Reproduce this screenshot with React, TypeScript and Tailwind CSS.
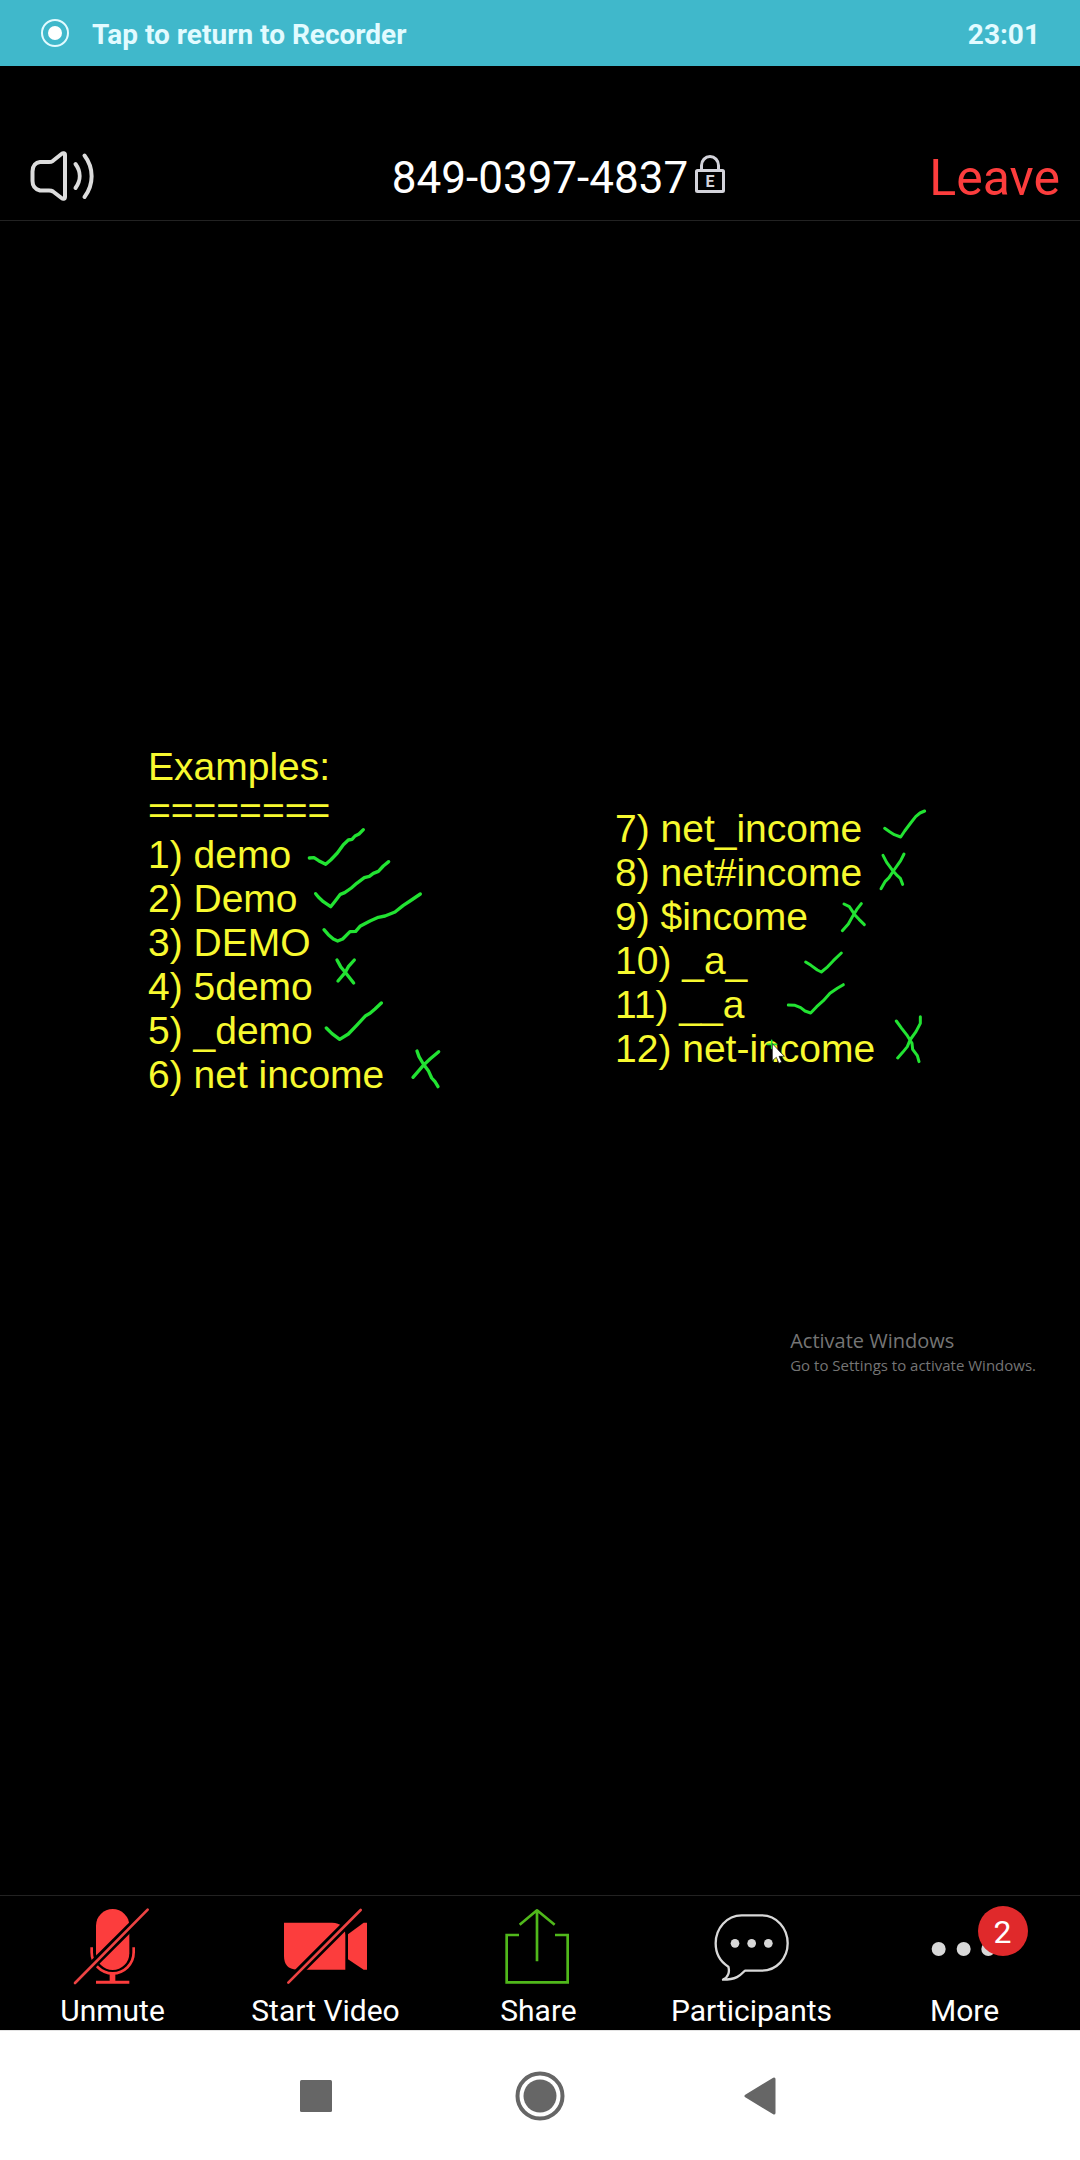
const roboto = 'font-[Roboto,sans-serif]';

const leftItems = ['1) demo', '2) Demo', '3) DEMO', '4) 5demo', '5) _demo', '6) net income'];
const rightItems = ['7) net_income', '8) net#income', '9) $income', '10) _a_', '11) __a', '12) net-income'];

function StatusBar() {
  return (
    <button className="flex h-[66px] w-full items-center px-10 text-[28px] leading-8 font-bold text-[#e2fbff]">
      <svg className="h-[30px] w-[30px]" viewBox="0 0 30 30" aria-hidden="true">
        <circle cx="15" cy="15" r="13" fill="none" stroke="#e2fbff" strokeWidth="2" />
        <circle cx="15" cy="15" r="7" fill="#fff" />
      </svg>
      <span className="ml-[22px] pt-1">Tap to return to Recorder</span>
      <time className="ml-auto pt-1">23:01</time>
    </button>
  );
}

function SpeakerIcon() {
  return (
    <svg className="h-[52px] w-[68px]" viewBox="28 150 68 52" fill="none" stroke="#dcdcdc" strokeWidth="4" strokeLinecap="round" strokeLinejoin="round" aria-hidden="true">
      <path d="M40 162H49C51 162 52 161.500 53 160.800L61.500 154C63 152.800 65 153 65 155V197C65 199 63 199.200 61.500 198L53 191.500C52 190.800 51 190.500 49 190.500H40C36 189.500 32.500 187 32.500 181V171.500C32.500 165.500 36 162.500 40 162Z" />
      <path d="M75.500 164C81 171.500 81 180.500 75.500 188" />
      <path d="M84.500 155.500C94 168 94 184.500 84.500 197" />
    </svg>
  );
}

function LockIcon() {
  return (
    <svg className="h-10 w-8" viewBox="694 154 32 40" fill="none" stroke="#d3d3da" strokeWidth="3" aria-hidden="true">
      <rect x="696.500" y="170.500" width="27" height="21" rx="1" />
      <path d="M701.500 170V165.500A8.500 9 0 0 1 718.500 165.500V170" />
      <text x="710" y="187" textAnchor="middle" fontSize="16" fontWeight="700" fontFamily="Roboto, sans-serif" fill="#d3d3da" stroke="none">E</text>
    </svg>
  );
}

function MeetingHeader() {
  return (
    <header className="border-b border-[#222] pt-[68px]">
      <div className="grid h-[86px] grid-cols-[1fr_auto_1fr] items-center px-5">
        <button aria-label="Speaker" className="justify-self-start pb-0.5 pl-2">
          <SpeakerIcon />
        </button>
        <h1 className="pt-0.5 text-[44px] leading-[52px]">849-0397-4837</h1>
        <div className="flex items-center justify-between pl-1.5">
          <span className="pb-1.5"><LockIcon /></span>
          <button className="pt-0.5 text-[50px] leading-[58px] text-[#fc3d3d]">Leave</button>
        </div>
      </div>
    </header>
  );
}

function LeftMarks() {
  return (
    <svg className="pointer-events-none absolute -top-[15px] -left-[18px] h-[380px] w-[330px]" viewBox="0 0 990 1140" fill="none" stroke="#22e332" strokeWidth="10" strokeLinecap="round" strokeLinejoin="round" aria-hidden="true">
      <path d="M538 384L552 383L566 392L587 403L602 390L622 369L640 344L655 330L666 328L675 318L687 312L700 299" />
      <path d="M557 491L565 501L580 515L602 530L614 515L631 493L644 488L664 474L680 460L703 443L718 439L730 430L745 424L760 408L776 395" />
      <path d="M582 599L595 614L610 627L623 633L638 627L660 605L677 604L690 589L720 573L745 562L765 558L795 546L820 526L840 513L871 492" />
      <path d="M621 690L632 710L648 730L671 759M673 690L655 710L646 727L624 753" />
      <path d="M589 894L606 911L629 928L655 912L680 886L707 857L720 850L735 837L754 819" />
      <path d="M861 963L867 980L880 1002L895 1022L905 1044L915 1055L924 1070M926 965L900 987L880 1006L862 1027L849 1042" />
    </svg>
  );
}

function RightMarks() {
  return (
    <svg className="pointer-events-none absolute -top-[17px] -left-[15px] h-[290px] w-[350px]" viewBox="0 0 1050 870" fill="none" stroke="#22e332" strokeWidth="9" strokeLinecap="round" strokeLinejoin="round" aria-hidden="true">
      <path d="M854 115L870 126L883 134L902 141L914 123L932 99L947 80L960 69L974 63" />
      <path d="M849 196L860 217L876 239L892 257L901 265L908 283M912 192L902 212L880 243L867 263L855 275L843 296" />
      <path d="M732 342L748 350L764 374L777 388L793 404M784 341L770 359L758 379L745 402L727 422" />
      <path d="M617 516L633 526L652 540L664 546L680 533L700 512L724 489" />
      <path d="M565 645L585 646L602 653L615 663L632 669L650 650L670 632L690 610L712 595L730 584" />
      <path d="M889 693L905 715L922 737L936 760L938 778L952 797L957 815M961 680L961 700L948 725L930 750L922 770L908 787L893 804" />
      <path d="M515 751V775M502 763H530" strokeWidth="5" />
      <path d="M517 762V812L529 802L537 820L545 816L537 799H552Z" fill="#fff" stroke="#111" strokeWidth="2" />
    </svg>
  );
}

function SharedScreen() {
  return (
    <main className="flex flex-1 items-center font-['Liberation_Sans',Arial,sans-serif]">
      <section aria-label="Shared screen" className="w-full pt-[105px] pb-[99px]">
        <div className="grid grid-cols-2 gap-x-0.5 pl-37 text-[39px] leading-[44px] text-[#f7f92f]">
          <div className="relative">
            <LeftMarks />
            <h2>Examples:</h2>
            <p>========</p>
            <ul>
              {leftItems.map((item) => <li key={item}>{item}</li>)}
            </ul>
          </div>
          <div className="relative mt-[62px]">
            <ul>
              {rightItems.map((item) => <li key={item}>{item}</li>)}
            </ul>
            <RightMarks />
          </div>
        </div>
        <div className="mt-58 flex justify-end pr-11">
          <div className="font-['Open_Sans',sans-serif] text-[#757575]">
            <p className="text-[20px] leading-6">Activate Windows</p>
            <p className="text-[15px] leading-6">Go to Settings to activate Windows.</p>
          </div>
        </div>
      </section>
    </main>
  );
}

function MicOffIcon() {
  return (
    <svg className="h-[76px] w-[76px]" viewBox="225 84 228 228" fill="none" overflow="visible" aria-hidden="true">
      <rect x="288" y="87" width="100" height="183" rx="50" fill="#fc3d3d" />
      <path d="M275 202V217A63 63 0 0 0 401 217V202" stroke="#fc3d3d" strokeWidth="8" />
      <path d="M329 278H346V302H388V311H288V302H329Z" fill="#fc3d3d" />
      <path d="M218 314L450 83" stroke="#000" strokeWidth="25" />
      <path d="M225 309L443 89" stroke="#ec4343" strokeWidth="8" strokeLinecap="round" />
    </svg>
  );
}

function VideoOffIcon() {
  return (
    <svg className="h-[76px] w-[84px]" viewBox="852 84 252 228" fill="none" overflow="visible" aria-hidden="true">
      <path d="M852 128H996Q1036 130 1036 165V269H890Q852 267 852 228Z" fill="#fc3d3d" />
      <path d="M1044 163L1091 128H1101V269H1091L1044 238Z" fill="#fc3d3d" />
      <path d="M858 314L1089 83" stroke="#000" strokeWidth="25" />
      <path d="M865 308L1082 90" stroke="#ec4343" strokeWidth="8" strokeLinecap="round" />
    </svg>
  );
}

function ShareIcon() {
  return (
    <svg className="h-[76px] w-[76px]" viewBox="243 84 228 228" fill="none" stroke="#50b81b" strokeWidth="8" aria-hidden="true">
      <path d="M297 165H260V307H443V165H405" />
      <path d="M351 244V91M299 134L351 91L404 134" strokeLinejoin="round" />
    </svg>
  );
}

function ChatIcon() {
  return (
    <svg className="h-[76px] w-[76px]" viewBox="882 84 228 228" fill="none" aria-hidden="true">
      <path d="M965 106H1025C1070 106 1103 145 1103 190C1103 235 1070 272 1025 272H975C966 277 960 299 909 299C924 293 930 276 925 260C902 246 887 222 887 190C887 145 920 106 965 106Z" stroke="#d8d8d8" strokeWidth="7" strokeLinejoin="round" />
      <circle cx="945" cy="190" r="13" fill="#d8d8d8" />
      <circle cx="995" cy="190" r="13" fill="#d8d8d8" />
      <circle cx="1045" cy="190" r="13" fill="#d8d8d8" />
    </svg>
  );
}

function MoreIcon() {
  return (
    <span className="relative">
      <svg className="h-[76px] w-[76px]" viewBox="260 84 228 228" fill="#d8d8d8" aria-hidden="true">
        <circle cx="295" cy="207" r="21" />
        <circle cx="370" cy="207" r="21" />
        <circle cx="444" cy="207" r="21" />
      </svg>
      <span className="absolute -top-0.5 left-[51px] flex h-[50px] w-[50px] items-center justify-center rounded-full bg-[#e0292b] pt-0.5 text-[32px] leading-9">2</span>
    </span>
  );
}

const tools = [
  { label: 'Unmute', icon: <MicOffIcon /> },
  { label: 'Start Video', icon: <VideoOffIcon /> },
  { label: 'Share', icon: <ShareIcon /> },
  { label: 'Participants', icon: <ChatIcon /> },
  { label: 'More', icon: <MoreIcon /> },
];

function Toolbar() {
  return (
    <footer className="grid grid-cols-5 border-t border-[#222] pt-3 pr-[9px] pb-px pl-1.5">
      {tools.map(({ label, icon }) => (
        <button key={label} className="flex flex-col items-center gap-[9px] text-[30px] leading-9 whitespace-nowrap">
          {icon}
          <span>{label}</span>
        </button>
      ))}
    </footer>
  );
}

function SystemNav() {
  return (
    <nav className="flex h-[130px] items-center justify-center gap-44 border-t border-[#e3e3e3] bg-white">
      <button aria-label="Recent apps">
        <svg className="h-[50px] w-12" viewBox="0 0 48 50" aria-hidden="true">
          <rect x="8" y="9" width="32" height="32" rx="1.500" fill="#666" />
        </svg>
      </button>
      <button aria-label="Home">
        <svg className="h-[50px] w-12" viewBox="0 0 48 50" overflow="visible" aria-hidden="true">
          <circle cx="24" cy="25" r="22.500" fill="none" stroke="#666" strokeWidth="4" />
          <circle cx="24" cy="25" r="16.500" fill="#666" />
        </svg>
      </button>
      <button aria-label="Back">
        <svg className="h-[50px] w-12" viewBox="0 0 48 50" aria-hidden="true">
          <path d="M6 25L34 8V42Z" fill="#666" stroke="#666" strokeWidth="3" strokeLinejoin="round" />
        </svg>
      </button>
    </nav>
  );
}

export default function App() {
  return (
    <div className={`flex min-h-screen flex-col bg-black text-white ${roboto}`}>
      <div className="bg-[#40b8cb]">
        <StatusBar />
      </div>
      <MeetingHeader />
      <SharedScreen />
      <Toolbar />
      <SystemNav />
    </div>
  );
}
